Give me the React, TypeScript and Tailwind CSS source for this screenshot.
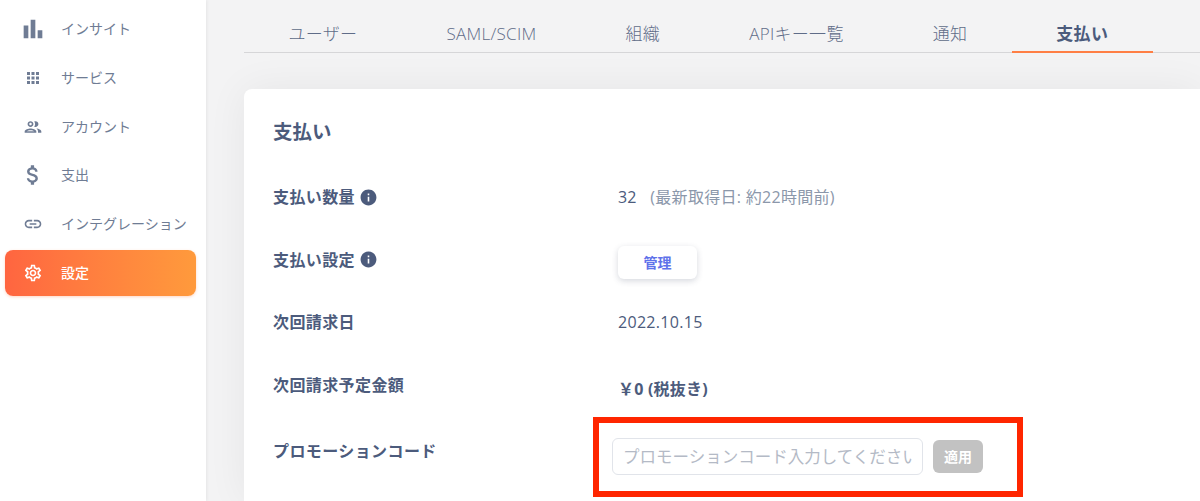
import type { ReactNode } from "react";
import { MdApps, MdAttachMoney, MdBarChart, MdInfo, MdLink, MdOutlineGroup, MdOutlineSettings } from "react-icons/md";

const navItems = [
  { label: "インサイト", icon: <MdBarChart size={28} /> },
  { label: "サービス", icon: <MdApps size={18} /> },
  { label: "アカウント", icon: <MdOutlineGroup size={20} /> },
  { label: "支出", icon: <MdAttachMoney size={26} /> },
  { label: "インテグレーション", icon: <MdLink size={20} /> },
  { label: "設定", icon: <MdOutlineSettings size={20} />, active: true },
];

const tabs = ["ユーザー", "SAML/SCIM", "組織", "APIキー一覧", "通知", "支払い"];

function Row({ label, info, className, children }: { label: string; info?: boolean; className?: string; children: ReactNode }) {
  return (
    <div className={`flex h-[62.5px] items-center ${className ?? ""}`}>
      <div className="flex w-[345px] shrink-0 items-center gap-[4px] text-[16px] leading-none font-bold tracking-[0.4px] text-[#4c5b7c]">
        {label}
        {info && <MdInfo size={19} />}
      </div>
      <div className="flex items-center">{children}</div>
    </div>
  );
}

export default function App() {
  return (
    <div className="flex h-[501px] w-[1200px] overflow-hidden bg-[#f3f3f4] font-['Open_Sans','Noto_Sans_CJK_JP',sans-serif]">
      <aside className="z-10 flex w-[206px] shrink-0 flex-col gap-[2.8px] bg-white pt-[6px] pr-[10px] pl-[5px] shadow-[1px_0_3px_rgba(0,0,0,0.06)]">
        {navItems.map((item) => (
          <div
            key={item.label}
            className={`flex h-[46px] items-center rounded-lg text-[14px] ${
              item.active
                ? "bg-gradient-to-r from-[#ff6540] to-[#ff9a3c] font-medium text-white shadow-[0_1px_3px_rgba(255,120,60,0.3)]"
                : "text-[#6f7c94]"
            }`}
          >
            <span className="flex w-[56px] shrink-0 justify-center">{item.icon}</span>
            <span className="pb-[1px]">{item.label}</span>
          </div>
        ))}
      </aside>

      <main className="flex min-w-0 flex-1 flex-col pl-[38px]">
        <nav className="mt-[17px] flex h-[36px] shrink-0 border-b border-[#d6d6d8]">
          {tabs.map((tab) => (
            <div
              key={tab}
              className={`h-[36px] px-[44.5px] pt-[2px] text-[17px] leading-[30px] tracking-[0.3px] whitespace-nowrap ${
                tab === "支払い" ? "border-b-2 border-[#ff7f45] font-bold text-[#4c5b7c]" : "font-light text-[#5f6c88]"
              }`}
            >
              {tab}
            </div>
          ))}
        </nav>

        <section className="relative mt-[36px] flex-1 rounded-tl-lg bg-white pt-[29px] pl-[29px] shadow-[0_0_40px_rgba(0,0,0,0.06)]">
          <h1 className="mb-[20px] text-[19.5px] leading-[28px] font-bold text-[#4c5b7c]">支払い</h1>

          <Row label="支払い数量" info>
            <span className="text-[16px] text-[#4c5b7c]">32</span>
            <span className="ml-[14px] text-[16px] tracking-[0.3px] text-[#8b97aa]">(最新取得日: 約22時間前)</span>
          </Row>
          <Row label="支払い設定" info>
            <button className="mt-[6px] h-[33px] w-[79px] rounded-md bg-white text-[14px] font-bold text-[#5f72ea] shadow-[0_2px_6px_rgba(50,60,90,0.2)]">
              管理
            </button>
          </Row>
          <Row label="次回請求日">
            <span className="text-[16px] tracking-[0.3px] text-[#4c5b7c]">2022.10.15</span>
          </Row>
          <Row label="次回請求予定金額">
            <span className="pt-[8px] text-[16px] font-bold tracking-[0.2px] text-[#4c5b7c]">{"\uFFE5"}0 (税抜き)</span>
          </Row>
          <Row label="プロモーションコード" className="mt-[4px]">
            <div className="-ml-[6px] flex items-center gap-[10px] pt-[10px]">
              <input
                readOnly
                placeholder="プロモーションコード入力してください"
                className="h-[37px] w-[311px] rounded-md border border-[#e1e4ea] bg-white px-[10px] text-[16.5px] outline-none placeholder:text-[#b4bac6]"
              />
              <button className="h-[33px] w-[50px] rounded-md bg-[#c2c2c2] text-[14px] font-bold text-white">適用</button>
            </div>
          </Row>

          {/* 赤枠の注釈 */}
          <div className="absolute top-[328px] left-[349px] h-[80px] w-[430px] border-[6px] border-[#ff2600]" />
        </section>
      </main>
    </div>
  );
}
